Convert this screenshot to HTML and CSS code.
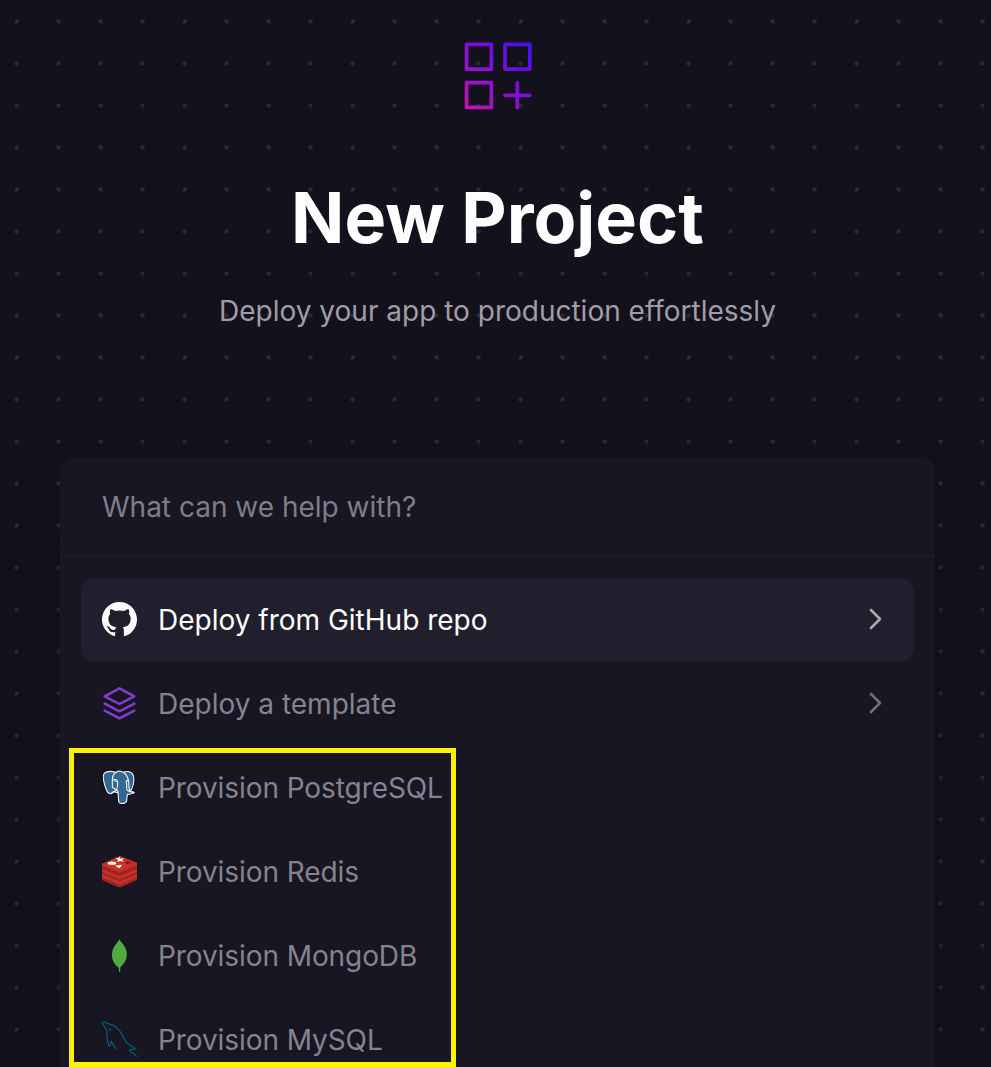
FILE: index.html
```html
<!DOCTYPE html>
<html lang="en">
<head>
<meta charset="utf-8">
<title>New Project</title>
<link rel="stylesheet" href="styles.css">
</head>
<body>
<main class="page">
  <header class="hero">
    <svg class="hero-icon" viewBox="0 0 70 70" fill="none" stroke="url(#brand)" stroke-width="3.7" stroke-linejoin="round" stroke-linecap="round">
      <defs><linearGradient id="brand" gradientUnits="userSpaceOnUse" x1="2" y1="68" x2="63" y2="7"><stop offset="0" stop-color="#c90fb8"/><stop offset="1" stop-color="#4a0fef"/></linearGradient></defs>
      <rect x="2.6" y="2.3" width="24.8" height="24.8"/>
      <rect x="41" y="2.3" width="24.8" height="24.8"/>
      <rect x="2.6" y="40.6" width="24.8" height="24.8"/>
      <path d="M53.3 40.700v24.8M41 53.300h24.800"/>
    </svg>
    <h1 class="title">New Project</h1>
    <p class="subtitle">Deploy your app to production effortlessly</p>
  </header>
  <section class="card">
    <div class="search">What can we help with?</div>
    <ul class="options">
      <li class="option active">
        <svg class="icon" viewBox="0 0 16 16" fill="#fff"><path d="M8 0C3.58 0 0 3.58 0 8c0 3.54 2.29 6.53 5.47 7.59.4.07.55-.17.55-.38 0-.19-.01-.82-.01-1.49-2.01.37-2.53-.49-2.69-.94-.09-.23-.48-.94-.82-1.13-.28-.15-.68-.52-.01-.53.63-.01 1.08.58 1.23.82.72 1.21 1.87.87 2.33.66.07-.52.28-.87.51-1.07-1.78-.2-3.64-.89-3.64-3.95 0-.87.31-1.59.82-2.15-.08-.2-.36-1.02.08-2.12 0 0 .67-.21 2.2.82.64-.18 1.32-.27 2-.27s1.36.09 2 .27c1.53-1.04 2.2-.82 2.2-.82.44 1.1.16 1.92.08 2.12.51.56.82 1.27.82 2.15 0 3.07-1.87 3.75-3.65 3.95.29.25.54.73.54 1.48 0 1.07-.01 1.93-.01 2.2 0 .21.15.46.55.38A8.01 8.01 0 0 0 16 8c0-4.42-3.58-8-8-8z"/></svg>
        <span class="label">Deploy from GitHub repo</span>
        <svg class="chevron" viewBox="0 0 14 24"><path d="M2 3l9 9-9 9"/></svg>
      </li>
      <li class="option">
        <svg class="icon" viewBox="36 33 105 105" fill="none" stroke="#853bce" stroke-width="7.500" stroke-linejoin="round" stroke-linecap="round"><path d="M88.500 40L133 64L88.500 87L44 64ZM44 86l44.500 23L133 86M44 107l44.500 23L133 107"/></svg>
        <span class="label">Deploy a template</span>
        <svg class="chevron" viewBox="0 0 14 24"><path d="M2 3l9 9-9 9"/></svg>
      </li>
      <li class="option provision">
        <svg class="icon" viewBox="36 36 105 105" stroke-linejoin="round" stroke-linecap="round">
          <path stroke="#070811" stroke-width="10" d="M78 43C64 39 47 39 41 49C38 55 41 75 47 90C52 105 57 109 64 107C69 104 70 102 73 101C77 104 80 104 84 105L86 130C89 139 106 139 110 129L112 109C121 109 129 107 133 103C131 101 126 103 120 101C129 90 134 69 131 55C127 40 111 38 99 43C92 38 84 39 78 43Z"/>
          <g fill="#336791" stroke="#f4f6f8" stroke-width="3.300"><path d="M78 43C64 39 47 39 41 49C38 55 41 75 47 90C52 105 57 109 64 107C69 104 70 102 73 101C77 104 80 104 84 105L86 130C89 139 106 139 110 129L112 109C121 109 129 107 133 103C131 101 126 103 120 101C129 90 134 69 131 55C127 40 111 38 99 43C92 38 84 39 78 43Z"/><path fill="none" d="M79 43C69 48 66 58 67 72L67 85C69 93 76 92 79 97C77 101 70 98 66 104M67 68C72 63 82 63 83 71C84 80 83 87 79 96M100 43C107 47 112 55 115 66C107 66 108 71 110 77C112 84 107 92 112 97C115 101 121 101 130 102M115 66C118 73 114 82 119 99M84 105C85 99 83 96 79 97"/></g>
          <path d="M74 69l5 1M110 69l4-1" stroke="#fff" stroke-width="3"/>
        </svg>
        <span class="label">Provision PostgreSQL</span>
      </li>
      <li class="option provision">
        <svg class="icon" viewBox="36 36 105 105">
          <path fill="#9d2620" d="M36 67L88 86L141 67V113Q137 116 95 134Q88 137 82 134Q40 117 36 113Z"/>
          <path fill="#c9302b" d="M36 97l46 19q6 3 13 0l46-19v9l-46 19q-7 3-13 0l-46-19zM36 81l46 19q6 3 13 0l46-19v9l-46 19q-7 3-13 0l-46-19zM36 65L82 45Q88 40 95 44L141 62V70L95 89Q88 92 82 89L36 70Z"/>
          <ellipse cx="66" cy="63.500" rx="13" ry="5" fill="#fff"/>
          <path fill="#fff" d="M74 71l23-3-8 11zM76 48l9 1 4-4 3 5 11-1-7 5 6 5-11-2-9 3 2-6z"/>
          <path fill="#7a0c08" d="M104 62l12-5v10z"/><path fill="#ad2115" d="M116 57l11 5-11 5z"/>
        </svg>
        <span class="label">Provision Redis</span>
      </li>
      <li class="option provision">
        <svg class="icon" viewBox="36 36 105 105"><path fill="#4faa41" d="M88.500 39C91 48 98 51 104 62C111 74 113 89 107 103C103 112 97 119 91 124L90.500 138H87.500L86 125C76 118 67 106 66 90C65 77 70 64 78 54C84 47 87 44 88.500 39Z"/></svg>
        <span class="label">Provision MongoDB</span>
      </li>
      <li class="option provision">
        <svg class="icon" viewBox="36 46 105 105" fill="none" stroke="#005e78" stroke-width="3.700" stroke-linejoin="round" stroke-linecap="round"><path d="M139 149C133 142 125 138 118 131C124 127 129 129 136 127C128 118 119 115 110 109C106 102 102 94 96 84C90 73 80 61 65 54C57 54 54 50 47 47C41 44 35 47 38 52C41 59 48 63 50 70C53 77 49 85 52 94C53 104 55 116 58 119C62 118 61 109 64 104C68 111 73 119 79 127"/><path d="M58 65L62 69M59 68l1 3"/></svg>
        <span class="label">Provision MySQL</span>
      </li>
    </ul>
  </section>
  <div class="highlight"></div>
</main>
</body>
</html>
```

FILE: styles.css
```css
* { box-sizing: border-box; }
body { margin: 0; background: #13111c; font-family: Inter, sans-serif; }
.page {
  position: relative;
  height: 1067px;
  overflow: hidden;
  background: radial-gradient(circle, #2d2b35 1.6px, transparent 2.5px) -4.500px 0.500px / 42px 42px, #13111c;
}
.hero { height: 458px; padding-top: 42px; display: flex; flex-direction: column; align-items: center; }
.hero-icon { width: 70px; height: 70px; margin-left: 6px; }
.title { margin: 64px 0 0 4px; font-size: 70px; line-height: 84px; font-weight: 700; color: #fff; white-space: nowrap; }
.subtitle { margin: 30px 0 0 4px; font-size: 28px; line-height: 42px; color: #a09da9; white-space: nowrap; }
.card {
  width: 875px;
  height: 700px;
  margin-left: 60px;
  border-radius: 14px;
  background: #181622;
  box-shadow: 0 50px 65px -5px rgba(26, 7, 38, 0.55);
}
.search { height: 99px; padding-left: 42px; border-bottom: 1px solid #211f2c; font-size: 28px; line-height: 98px; color: #807d8a; }
.options { list-style: none; margin: 0; padding: 21px; }
.option { height: 84px; padding: 0 31px 1px 21px; display: flex; align-items: center; border-radius: 14px; font-size: 28px; line-height: 35px; color: #868390; }
.provision { letter-spacing: -0.08px; }
.active { background: #211f2d; color: #fff; }
.icon { width: 35px; height: 35px; margin: 0 21px 1px 0; overflow: visible; flex: none; }
.label { flex: 1; white-space: nowrap; padding-top: 1px; }
.chevron { width: 14px; height: 24px; margin-bottom: 1px; fill: none; stroke: #716e7b; stroke-width: 2.600; stroke-linecap: round; stroke-linejoin: round; }
.active .chevron { stroke: #aaa7b3; }
.highlight { position: absolute; left: 69px; top: 748px; width: 387px; height: 319px; border: 5px solid #fff200; }
```
